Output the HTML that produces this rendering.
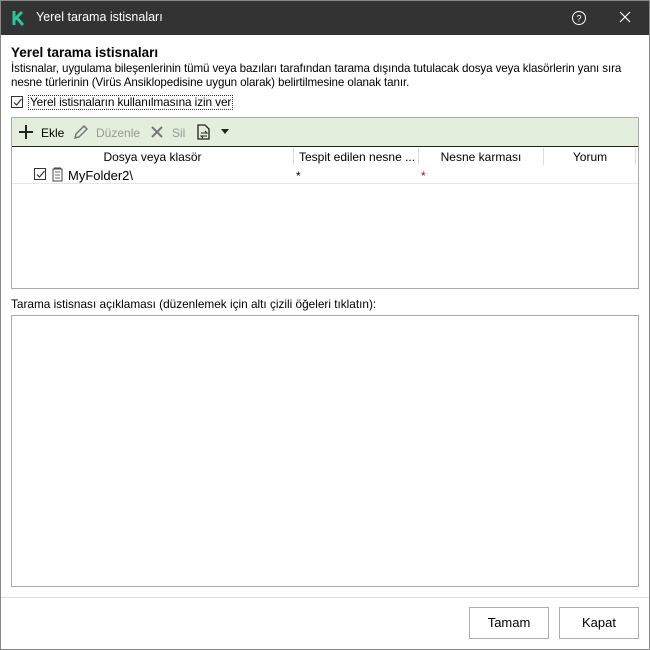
<!DOCTYPE html>
<html><head><meta charset="utf-8"><style>
*{margin:0;padding:0;box-sizing:border-box}
body{width:650px;height:650px;overflow:hidden;background:#fff;font-family:"Liberation Sans",sans-serif;font-size:12px;color:#000;position:relative}
.abs{position:absolute}
.title{left:0;top:0;width:650px;height:35px;background:#333;color:#fff}
.cb{width:12px;height:12px;border:1px solid #333;background:#fff}
.btn{border:1px solid #adadad;background:#fff;width:80px;height:32px;text-align:center;line-height:30px;font-size:13px}
</style></head><body>
<div class="abs title">
 <svg class="abs" style="left:12px;top:10px" width="14" height="16" viewBox="0 0 14 16"><path d="M2 1v14M2 10l8-8M5 8l6 7" stroke="#2ac49a" stroke-width="3" fill="none"/></svg>
 <div class="abs" style="left:36px;top:10px;font-size:12.5px">Yerel tarama istisnaları</div>
 <svg class="abs" style="left:571px;top:10px" width="16" height="16"><circle cx="8" cy="8" r="6.5" stroke="#fff" fill="none"/><text x="8" y="11.5" font-size="9" fill="#fff" text-anchor="middle" font-family="Liberation Sans">?</text></svg>
 <svg class="abs" style="left:619px;top:11px" width="12" height="12"><path d="M1 1l10 10M11 1L1 11" stroke="#fff" stroke-width="1.2"/></svg>
</div>
<div class="abs" style="left:0;top:0;width:650px;height:650px;border:1px solid #888;pointer-events:none;z-index:5"></div>
<div class="abs" style="left:11px;top:45px;font-size:13.5px;font-weight:bold">Yerel tarama istisnaları</div>
<div class="abs" style="left:11px;top:62px;line-height:14px;width:636px;font-size:11.6px;letter-spacing:-0.1px">İstisnalar, uygulama bileşenlerinin tümü veya bazıları tarafından tarama dışında tutulacak dosya veya klasörlerin yanı sıra<br>nesne türlerinin (Virüs Ansiklopedisine uygun olarak) belirtilmesine olanak tanır.</div>
<div class="abs cb" style="left:11px;top:96px"></div>
<svg class="abs" style="left:12px;top:97px" width="11" height="11"><path d="M2 5.5l2.5 2.5 5-6" stroke="#333" fill="none" stroke-width="1.2"/></svg>
<div class="abs" style="left:28px;top:95px;border:1px dotted #333;padding:0 1px;line-height:13px;font-size:11.8px;letter-spacing:-0.1px">Yerel istisnaların kullanılmasına izin ver</div>
<div class="abs" style="left:11px;top:117px;width:628px;height:172px;border:1px solid #aaa">
 <div class="abs" style="left:0;top:0;width:626px;height:29px;background:#e4eedc;border-bottom:1px solid #222">
  <svg class="abs" style="left:7px;top:7px" width="14" height="14"><path d="M7 0v14M0 7h14" stroke="#222" stroke-width="2"/></svg>
  <div class="abs" style="left:29px;top:8px">Ekle</div>
  <svg class="abs" style="left:61px;top:6px" width="16" height="16"><path d="M2 14l1-4 8-8 3 3-8 8z" stroke="#777" stroke-width="1.5" fill="none"/></svg>
  <div class="abs" style="left:84px;top:8px;color:#999">Düzenle</div>
  <svg class="abs" style="left:139px;top:8px" width="12" height="12"><path d="M1 1l10 10M11 1L1 11" stroke="#777" stroke-width="2"/></svg>
  <div class="abs" style="left:160px;top:8px;color:#999">Sil</div>
  <svg class="abs" style="left:185px;top:6px" width="14" height="17"><path d="M1 1h7l4 4v10H1z" stroke="#222" fill="none" stroke-width="1.3"/><path d="M4 9h6l-2-2M10 12H4l2 2" stroke="#222" fill="none"/></svg>
  <svg class="abs" style="left:209px;top:11px" width="8" height="5"><path d="M0 0h8L4 5z" fill="#222"/></svg>
 </div>
 <div class="abs" style="top:30px;left:0;width:626px;height:17px">
  <div class="abs" style="left:0;width:281px;text-align:center;top:2px">Dosya veya klasör</div>
  <div class="abs" style="left:281px;width:1px;height:17px;background:#ddd"></div>
  <div class="abs" style="left:287px;top:2px">Tespit edilen nesne ...</div>
  <div class="abs" style="left:406px;width:1px;height:17px;background:#ddd"></div>
  <div class="abs" style="left:407px;width:124px;text-align:center;top:2px">Nesne karması</div>
  <div class="abs" style="left:531px;width:1px;height:17px;background:#ddd"></div>
  <div class="abs" style="left:532px;width:92px;text-align:center;top:2px">Yorum</div>
  <div class="abs" style="left:623px;width:1px;height:17px;background:#ddd"></div>
 </div>
 <div class="abs" style="top:48px;left:0;width:626px;height:18px;border-bottom:1px solid #e6e6e6">
  <div class="abs cb" style="left:22px;top:2px"></div>
  <svg class="abs" style="left:23px;top:3px" width="11" height="11"><path d="M2 5.5l2.5 2.5 5-6" stroke="#333" fill="none" stroke-width="1.2"/></svg>
  <svg class="abs" style="left:40px;top:1px" width="11" height="15"><rect x="1" y="2" width="9" height="12" stroke="#444" fill="#fff"/><path d="M3 5h5M3 8h5M3 11h5" stroke="#666"/><path d="M2 1h7" stroke="#444"/></svg>
  <div class="abs" style="left:56px;top:2px;font-size:13px">MyFolder2\</div>
  <div class="abs" style="left:284px;top:3px">*</div>
  <div class="abs" style="left:409px;top:3px;color:#c00">*</div>
 </div>
</div>
<div class="abs" style="left:11px;top:297px;font-size:11.8px">Tarama istisnası açıklaması (düzenlemek için altı çizili öğeleri tıklatın):</div>
<div class="abs" style="left:11px;top:315px;width:628px;height:272px;border:1px solid #aaa"></div>
<div class="abs" style="left:0;top:597px;width:650px;height:1px;background:#ddd"></div>
<div class="abs btn" style="left:469px;top:607px">Tamam</div>
<div class="abs btn" style="left:559px;top:607px">Kapat</div>
</body></html>
